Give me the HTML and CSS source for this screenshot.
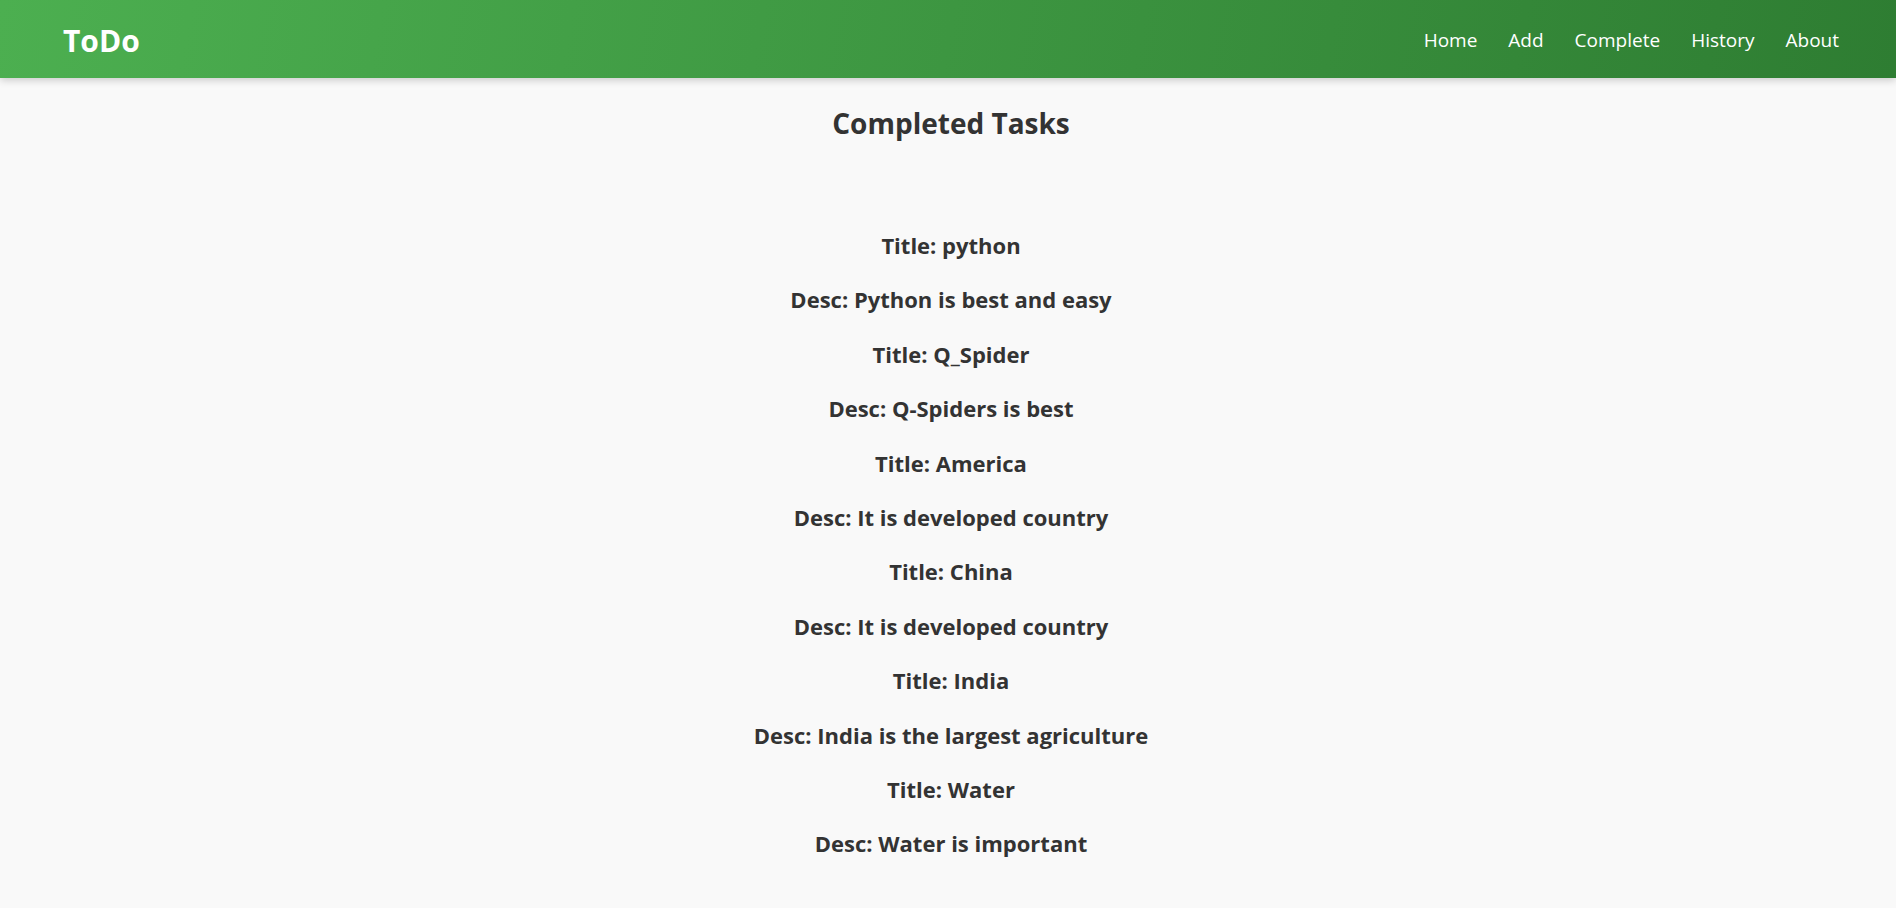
FILE: index.html
```html
<!DOCTYPE html>
<html>
<head>
<meta charset="utf-8">
<link rel="stylesheet" href="styles.css">
</head>
<body>
<header class="navbar">
  <div class="brand">ToDo</div>
  <nav class="links">
    <a href="#">Home</a>
    <a href="#">Add</a>
    <a href="#">Complete</a>
    <a href="#">History</a>
    <a href="#">About</a>
  </nav>
</header>
<main class="content">
  <h2 class="page-title">Completed Tasks</h2>
  <div class="tasks">
    <p class="line">Title: python</p>
    <p class="line">Desc: Python is best and easy</p>
    <p class="line">Title: Q_Spider</p>
    <p class="line">Desc: Q-Spiders is best</p>
    <p class="line">Title: America</p>
    <p class="line">Desc: It is developed country</p>
    <p class="line">Title: China</p>
    <p class="line">Desc: It is developed country</p>
    <p class="line">Title: India</p>
    <p class="line">Desc: India is the largest agriculture</p>
    <p class="line">Title: Water</p>
    <p class="line">Desc: Water is important</p>
  </div>
</main>
</body>
</html>
```

FILE: styles.css
```css
* { box-sizing: border-box; }
body {
  margin: 0;
  background: #f9f9f9;
  font-family: "Open Sans", "Noto Sans", sans-serif;
  color: #333333;
}
.navbar {
  height: 78px;
  display: flex;
  align-items: center;
  justify-content: space-between;
  padding: 2px 57px 0 63px;
  background: linear-gradient(100deg, #4caf50 0%, #2e7d32 100%);
  box-shadow: 0 2px 8px rgba(0, 0, 0, 0.2);
  position: relative;
}
.brand {
  color: #ffffff;
  font-weight: 700;
  font-size: 30px;
}
.links {
  display: flex;
  gap: 31px;
}
.links a {
  color: #ffffff;
  text-decoration: none;
  font-size: 19px;
}
.content {
  display: flex;
  flex-direction: column;
  align-items: center;
  padding-left: 6px;
}
.page-title {
  margin: 26px 0 0;
  font-size: 28px;
  font-weight: 700;
}
.tasks {
  display: flex;
  flex-direction: column;
  align-items: center;
  gap: 24.4px;
  margin-top: 88px;
}
.line {
  margin: 0;
  font-size: 22px;
  font-weight: 700;
  line-height: 30px;
}
```
